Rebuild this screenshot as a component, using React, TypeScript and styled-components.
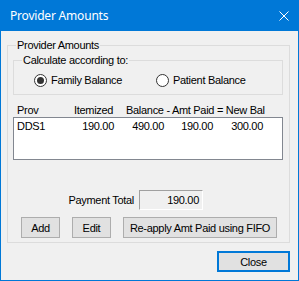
import React from "react";
import styled, { createGlobalStyle } from "styled-components";

const Global = createGlobalStyle`
  html, body { margin: 0; padding: 0; background: #f0f0f0; }
  body { font-family: "Liberation Sans", Arial, sans-serif; font-size: 11px; color: #000; letter-spacing: -0.3px; }
  * { box-sizing: border-box; }
`;

const Window = styled.div`
  width: 299px;
  height: 281px;
  display: flex;
  flex-direction: column;
  background: #f0f0f0;
  border: 1px solid #0078d7;
  border-top: none;
  overflow: hidden;
`;

const TitleBar = styled.div`
  height: 31px;
  margin: 0 -1px;
  background: #0078d7;
  color: #fff;
  display: flex;
  align-items: center;
  justify-content: space-between;
  padding: 0 10px 0 10px;
  font-family: "Noto Sans", "Open Sans", sans-serif;
  font-size: 12px;
  letter-spacing: -0.2px;
  flex-shrink: 0;
`;

const Body = styled.div`
  flex: 1;
  display: flex;
  flex-direction: column;
  padding: 14px 8px 0 6px;
`;

const GroupBox = styled.div<{ $pad: string }>`
  border: 1px solid #dcdcdc;
  display: flex;
  flex-direction: column;
  padding: ${(p) => p.$pad};
`;

const Caption = styled.div<{ $ml: number }>`
  align-self: flex-start;
  margin-top: -7px;
  margin-left: ${(p) => p.$ml}px;
  padding: 0 1px;
  line-height: 13px;
  height: 13px;
  background: #f0f0f0;
  white-space: nowrap;
`;

const InnerGroupWrap = styled.div`
  margin-top: 8px;
`;

const RadioRow = styled.div`
  display: flex;
  margin-top: 7px;
  padding-left: 20px;
  height: 13px;
`;

const RadioItem = styled.label<{ $w?: number }>`
  display: flex;
  align-items: center;
  gap: 4px;
  width: ${(p) => (p.$w ? `${p.$w}px` : "auto")};
  line-height: 13px;
`;

const RadioCircle = styled.span<{ $checked?: boolean }>`
  width: 13px;
  height: 13px;
  border-radius: 50%;
  border: 1px solid #333;
  background: #fff;
  display: flex;
  align-items: center;
  justify-content: center;
  flex-shrink: 0;
  &::after {
    content: "";
    display: ${(p) => (p.$checked ? "block" : "none")};
    width: 7px;
    height: 7px;
    border-radius: 50%;
    background: #333;
  }
`;

const HeaderRow = styled.div`
  display: flex;
  margin-top: 9px;
  height: 13px;
  line-height: 13px;
  padding-left: 4px;
  white-space: nowrap;
`;

const HeadCell = styled.span<{ $w: number }>`
  width: ${(p) => p.$w}px;
  flex-shrink: 0;
`;

const ListBox = styled.div`
  height: 43px;
  border: 1px solid #828790;
  background: #fff;
  padding: 2px 0 0 3px;
`;

const ListRow = styled.div`
  display: flex;
  line-height: 13px;
`;

const Cell = styled.span<{ $w: number; $right?: boolean }>`
  width: ${(p) => p.$w}px;
  text-align: ${(p) => (p.$right ? "right" : "left")};
  flex-shrink: 0;
`;

const TotalRow = styled.div`
  display: flex;
  align-items: center;
  margin-top: 30px;
  padding-left: 52px;
  gap: 5px;
`;

const TotalLabel = styled.span`
  width: 69px;
  text-align: right;
  white-space: nowrap;
`;

const TotalBox = styled.div`
  width: 64px;
  height: 20px;
  border-top: 1px solid #a0a0a0;
  border-left: 1px solid #a0a0a0;
  border-right: 1px solid #fff;
  border-bottom: 1px solid #fff;
  background: #f0f0f0;
  text-align: right;
  padding-right: 3px;
  line-height: 18px;
`;

const ButtonRow = styled.div`
  display: flex;
  margin-top: 7px;
  padding-left: 8px;
`;

const Button = styled.div<{ $w: number; $ml?: number; $default?: boolean }>`
  width: ${(p) => p.$w}px;
  height: 21px;
  margin-left: ${(p) => p.$ml ?? 0}px;
  background: #e1e1e1;
  border: ${(p) => (p.$default ? "2px solid #0078d7" : "1px solid #adadad")};
  display: flex;
  align-items: center;
  justify-content: center;
  white-space: nowrap;
  font-size: 11px;
`;

const Footer = styled.div`
  display: flex;
  justify-content: flex-end;
  margin-top: 8px;
`;

export default function App() {
  return (
    <>
      <Global />
      <Window>
        <TitleBar>
          <span>Provider Amounts</span>
          <svg width="10" height="10" viewBox="0 0 10 10">
            <path d="M0.5 0.5 L9.5 9.5 M9.5 0.5 L0.5 9.5" stroke="#fff" strokeWidth="1" />
          </svg>
        </TitleBar>
        <Body>
          <GroupBox $pad="0 6px 4px 5px">
            <Caption $ml={3}>Provider Amounts</Caption>
            <InnerGroupWrap>
              <GroupBox $pad="0 0 7px 0">
                <Caption $ml={8}>Calculate according to:</Caption>
                <RadioRow>
                  <RadioItem $w={122}>
                    <RadioCircle $checked />
                    Family Balance
                  </RadioItem>
                  <RadioItem>
                    <RadioCircle />
                    Patient Balance
                  </RadioItem>
                </RadioRow>
              </GroupBox>
            </InnerGroupWrap>
            <HeaderRow>
              <HeadCell $w={57}>Prov</HeadCell>
              <HeadCell $w={52}>Itemized</HeadCell>
              <span>Balance - Amt Paid = New Bal</span>
            </HeaderRow>
            <ListBox>
              <ListRow>
                <Cell $w={50}>DDS1</Cell>
                <Cell $w={47} $right>190.00</Cell>
                <Cell $w={50} $right>490.00</Cell>
                <Cell $w={49} $right>190.00</Cell>
                <Cell $w={50} $right>300.00</Cell>
              </ListRow>
            </ListBox>
            <TotalRow>
              <TotalLabel>Payment Total</TotalLabel>
              <TotalBox>190.00</TotalBox>
            </TotalRow>
            <ButtonRow>
              <Button $w={39}>Add</Button>
              <Button $w={39} $ml={12}>Edit</Button>
              <Button $w={154} $ml={12}>Re-apply Amt Paid using FIFO</Button>
            </ButtonRow>
          </GroupBox>
          <Footer>
            <Button $w={73} $default>Close</Button>
          </Footer>
        </Body>
      </Window>
    </>
  );
}
